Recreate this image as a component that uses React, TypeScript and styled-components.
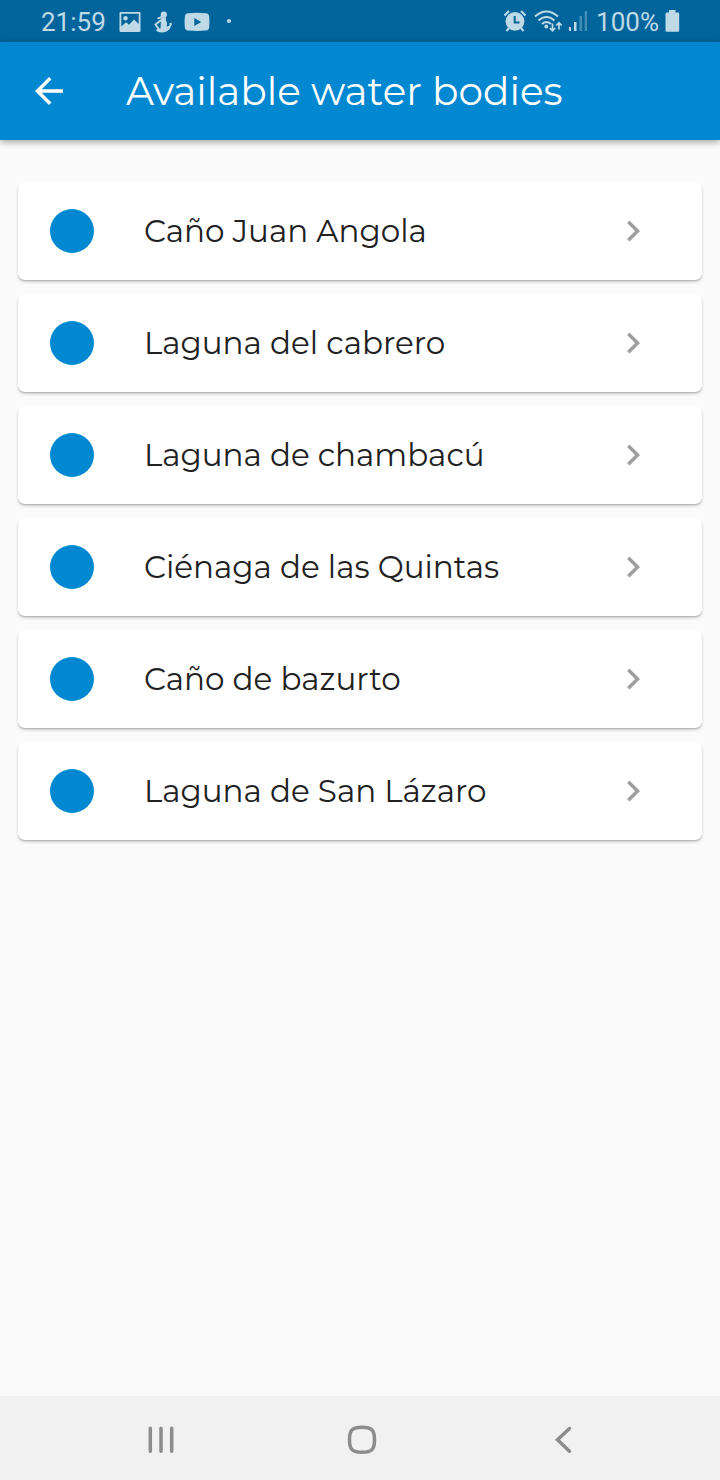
import React from "react";
import styled, { createGlobalStyle } from "styled-components";

const GlobalStyle = createGlobalStyle`
  * { box-sizing: border-box; }
  body { margin: 0; background: #fafafa; }
`;

const Screen = styled.div`
  display: flex;
  flex-direction: column;
  min-height: 100vh;
  background: #fafafa;
  font-family: Montserrat, Inter, sans-serif;
`;

const StatusBar = styled.div`
  display: flex;
  align-items: center;
  justify-content: space-between;
  height: 42px;
  padding: 2px 40px 0 41px;
  background: #01659c;
  color: #bfd9e7;
  font: 400 26px/40px Roboto, sans-serif;
`;

const StatusGroup = styled.div<{ $gap: number }>`
  display: flex;
  align-items: center;
  gap: ${(p) => p.$gap}px;
`;

const StatusIcon = styled.svg`
  display: block;
  flex: none;
  overflow: visible;
  fill: currentColor;
`;

const AppBar = styled.header`
  display: flex;
  align-items: center;
  gap: 56px;
  height: 98px;
  padding: 0 28px;
  background: #0288d1;
  color: #fff;
  box-shadow: 0 2px 7px rgba(0, 0, 0, 0.36);
`;

const IconButton = styled.button`
  display: flex;
  align-items: center;
  justify-content: center;
  padding: 0;
  border: 0;
  background: none;
  color: inherit;
  cursor: pointer;
`;

const Glyph = styled.svg`
  display: block;
  flex: none;
  width: 42px;
  height: 42px;
  fill: currentColor;
`;

const Title = styled.h1`
  margin: 0;
  font-size: 39px;
  line-height: 48px;
  font-weight: 400;
  white-space: nowrap;
`;

const List = styled.ul`
  flex: 1;
  display: flex;
  flex-direction: column;
  gap: 14px;
  margin: 0;
  padding: 42px 18px;
  list-style: none;
`;

const Card = styled.button`
  display: flex;
  align-items: center;
  gap: 50px;
  width: 100%;
  height: 98px;
  padding: 0 48px 0 32px;
  border: 0;
  border-radius: 7px;
  background: #fff;
  box-shadow: 0 2px 3px rgba(0, 0, 0, 0.2), 0 1px 1px rgba(0, 0, 0, 0.12);
  color: #212121;
  font-family: inherit;
  text-align: left;
  cursor: pointer;
`;

const Dot = styled.span`
  flex: none;
  width: 44px;
  height: 44px;
  border-radius: 50%;
  background: #0288d1;
`;

const Name = styled.span`
  flex: 1;
  font-size: 31px;
  line-height: 40px;
  font-weight: 400;
`;

const Chevron = styled(Glyph)`
  color: #9e9e9e;
`;

const NavBar = styled.nav`
  display: grid;
  grid-template-columns: repeat(3, 1fr);
  height: 84px;
  padding: 4px 57px 0 60px;
  background: #f1f1f1;
  color: #8c8c8c;
`;

const NavGlyph = styled.svg`
  display: block;
  fill: none;
  stroke: currentColor;
  stroke-width: 3.5;
  stroke-linecap: round;
`;

const waterBodies = [
  "Caño Juan Angola",
  "Laguna del cabrero",
  "Laguna de chambacú",
  "Ciénaga de las Quintas",
  "Caño de bazurto",
  "Laguna de San Lázaro",
];

export default function App() {
  return (
    <Screen>
      <GlobalStyle />
      <StatusBar>
        <StatusGroup $gap={13}>
          <span>21:59</span>
          <StatusIcon width="22" height="22" viewBox="0 0 22 22">
            <path
              fillRule="evenodd"
              d="M1.500 1H20.500Q21.500 1 21.500 2V20Q21.500 21 20.500 21H1.500Q.5 21 .5 20V2Q.5 1 1.500 1ZM2.300 2.800V15.500L7 11.200L10 13.800L15 8.500L19.700 13V2.800Z"
            />
            <circle cx="6.500" cy="7.200" r="2.200" />
          </StatusIcon>
          <StatusIcon width="17" height="22" viewBox="0 0 17 22">
            <circle cx="9.800" cy="3.700" r="3.100" />
            <path d="M7.500 6.500H12L11.800 9.500Q14 12 12.500 15.500Q15.500 15.500 15.800 13L14.800 12.500L17.700 11.500L17.800 14.500L17.200 14Q16.500 18.500 12.500 20.500Q8 22.300 4 20.800Q1.500 20 2.500 18.500Q4.500 17.500 6.500 17.500L6.800 12Z" />
            <path
              d="M8 8.500L1.500 13.500L5 18.500M8 5.500Q6 7.500 3.500 7.300"
              fill="none"
              stroke="currentColor"
              strokeWidth="1.900"
            />
          </StatusIcon>
          <StatusIcon width="26" height="20" viewBox="0 0 26 20">
            <path
              fillRule="evenodd"
              d="M4 1.300Q13 .3 22 1.300Q25 1.500 25.200 5Q25.700 10 25.200 15Q25 18.200 22 18.500Q13 19.300 4 18.500Q1 18.200 .8 15Q.3 10 .8 5Q1 1.500 4 1.300ZM10.300 6V14L17.200 10Z"
            />
          </StatusIcon>
          <StatusIcon width="12" height="6" viewBox="0 0 12 6">
            <circle cx="6" cy="2" r="2.100" />
          </StatusIcon>
        </StatusGroup>
        <StatusGroup $gap={7}>
          <StatusIcon width="24" height="24" viewBox="0 0 24 24">
            <path
              d="M1.500 5.500L6 1M18 1L22.500 5.500M6 18L3.500 21M18 18L20.500 21"
              stroke="currentColor"
              strokeWidth="2.200"
            />
            <circle cx="12" cy="11.300" r="9.400" />
            <path
              d="M11.700 6V12.500H16.500"
              fill="none"
              stroke="#01659c"
              strokeWidth="2"
            />
          </StatusIcon>
          <StatusIcon width="28" height="24" viewBox="0 0 28 24">
            <path
              d="M1 6.500Q12.500-3.500 24 6.500M4.500 10.500Q12.500 3.500 20.500 10.500M8 14Q12.500 10 17 14"
              fill="none"
              stroke="currentColor"
              strokeWidth="2.100"
            />
            <circle cx="12.300" cy="16.500" r="1.900" />
            <path
              d="M18.500 13.500V20.500M15.800 18L18.500 20.800L21.200 18M25 19.500V13M22.300 15.500L25 12.700L27.700 15.500"
              fill="none"
              stroke="currentColor"
              strokeWidth="1.700"
            />
          </StatusIcon>
          <StatusIcon width="20" height="22" viewBox="0 0 20 22">
            <rect x="0" y="16" width="2" height="4" />
            <rect x="5" y="11" width="2.500" height="9" />
            <rect x="10.500" y="5" width="2.500" height="15" opacity=".35" />
            <rect x="15.700" y="0" width="2.300" height="20" opacity=".35" />
          </StatusIcon>
          <StatusGroup $gap={6}>
            <span>100%</span>
            <StatusIcon width="15" height="24" viewBox="0 0 15 24">
              <path d="M4 0H10.500V2.500H13Q14.200 2.500 14.200 3.700V20.500Q14.200 21.700 13 21.700H1.700Q.5 21.700 .5 20.500V3.700Q.5 2.500 1.700 2.500H4Z" />
            </StatusIcon>
          </StatusGroup>
        </StatusGroup>
      </StatusBar>
      <AppBar>
        <IconButton aria-label="Back">
          <Glyph viewBox="0 0 24 24">
            <path d="M20 11H7.830l5.590-5.590L12 4l-8 8 8 8 1.410-1.410L7.830 13H20v-2z" />
          </Glyph>
        </IconButton>
        <Title>Available water bodies</Title>
      </AppBar>
      <List>
        {waterBodies.map((name) => (
          <li key={name}>
            <Card>
              <Dot />
              <Name>{name}</Name>
              <Chevron viewBox="0 0 24 24">
                <path d="M10 6L8.590 7.410 13.170 12l-4.580 4.590L10 18l6-6z" />
              </Chevron>
            </Card>
          </li>
        ))}
      </List>
      <NavBar>
        <IconButton aria-label="Recent apps">
          <NavGlyph width="30" height="30" viewBox="0 0 30 30">
            <path d="M4.300 3.200V26.200M15 3.200V26.200M25.700 3.200V26.200" />
          </NavGlyph>
        </IconButton>
        <IconButton aria-label="Home">
          <NavGlyph width="30" height="30" viewBox="0 0 30 30">
            <path d="M15 2.300C24.500 2.300 27.500 4.800 27.500 14.800S24.500 27.300 15 27.300 2.500 24.800 2.500 14.800 5.500 2.300 15 2.300Z" />
          </NavGlyph>
        </IconButton>
        <IconButton aria-label="Back to previous screen">
          <NavGlyph width="30" height="30" viewBox="0 0 30 30">
            <path d="M21.500 3.500L9.500 14.700L21.500 26.200" />
          </NavGlyph>
        </IconButton>
      </NavBar>
    </Screen>
  );
}
